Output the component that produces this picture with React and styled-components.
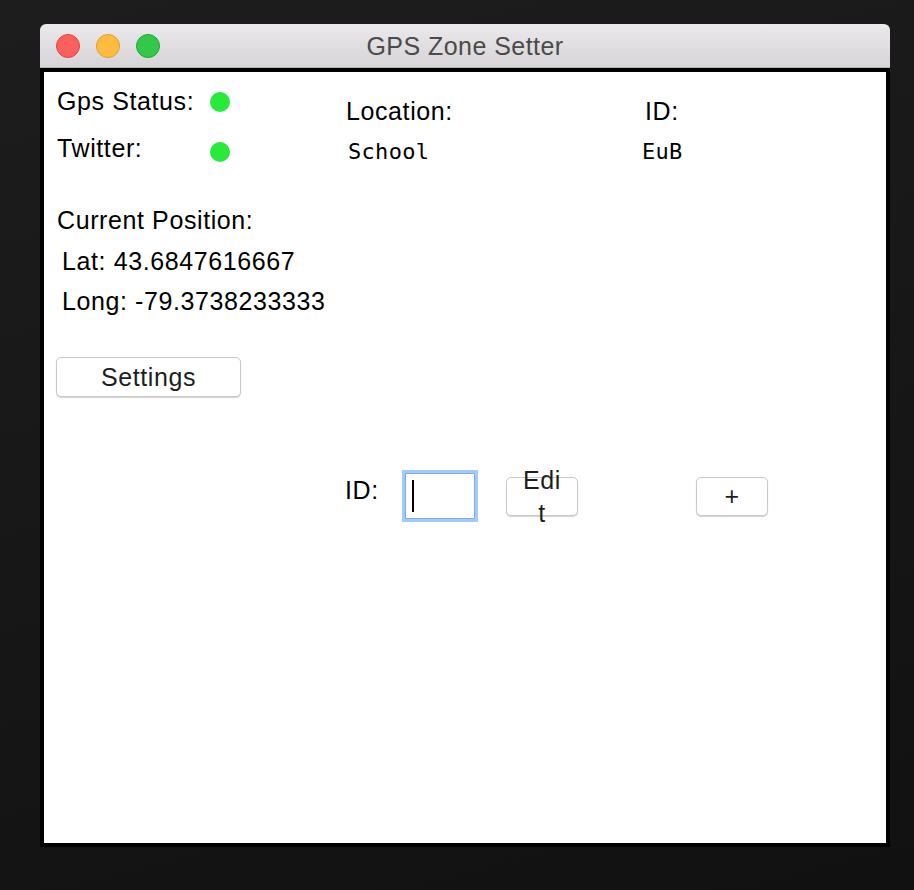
import styled, { createGlobalStyle } from 'styled-components'

const GlobalStyle = createGlobalStyle`
  html, body {
    margin: 0;
    padding: 0;
  }
  body {
    min-height: 890px;
    background: linear-gradient(165deg, #1d1d1d 0%, #161616 60%, #111111 100%);
    font-family: 'Liberation Sans', Arial, sans-serif;
  }
`

const Screen = styled.div`
  padding: 24px 0 0 40px;
`

const Window = styled.div`
  width: 850px;
  display: flex;
  flex-direction: column;
`

const TitleBar = styled.div`
  height: 43px;
  display: grid;
  grid-template-columns: 1fr auto 1fr;
  align-items: center;
  padding: 0 16px;
  background: linear-gradient(#ebe9eb, #d6d4d6);
  border-bottom: 1px solid #b3b1b3;
  border-radius: 6px 6px 0 0;
`

const Lights = styled.div`
  display: flex;
  gap: 16px;
`

const Light = styled.span`
  width: 22px;
  height: 22px;
  border-radius: 50%;
  background: ${(p) => p.$fill};
  border: 1px solid ${(p) => p.$edge};
`

const Title = styled.div`
  font-size: 25px;
  letter-spacing: 0.45px;
  color: #4b4b4b;
  margin-top: 1px;
`

const Body = styled.div`
  height: 757px;
  background: #ffffff;
  border: 4px solid #000000;
  padding: 14px 0 0 13px;
  box-sizing: content-box;
`

const TopArea = styled.div`
  display: flex;
  align-items: flex-start;
`

const Column = styled.div`
  width: ${(p) => p.$width};
  display: flex;
  flex-direction: column;
  align-items: flex-start;
`

const Label = styled.div`
  font-size: 25px;
  line-height: 30px;
  letter-spacing: 0.6px;
  color: #000000;
  white-space: nowrap;
  margin-top: ${(p) => p.$top || 0}px;
  margin-left: ${(p) => p.$left || 0}px;
  width: ${(p) => (p.$width ? `${p.$width}px` : 'auto')};
`

const Value = styled.div`
  font-family: 'DejaVu Sans Mono', 'Liberation Mono', monospace;
  font-size: 22px;
  line-height: 30px;
  letter-spacing: 0.3px;
  color: #000000;
  margin-top: ${(p) => p.$top || 0}px;
  margin-left: ${(p) => p.$left || 0}px;
`

const StatusRow = styled.div`
  display: flex;
  align-items: flex-start;
  height: 30px;
  margin-top: ${(p) => p.$top || 0}px;
`

const Dot = styled.span`
  width: 20px;
  height: 20px;
  border-radius: 50%;
  background: #27ea3b;
  margin-top: ${(p) => p.$top}px;
`

const Button = styled.button`
  box-sizing: border-box;
  width: ${(p) => p.$width}px;
  height: ${(p) => p.$height}px;
  margin-top: ${(p) => p.$top || 0}px;
  margin-left: ${(p) => p.$left || 0}px;
  padding: 0;
  display: flex;
  align-items: center;
  justify-content: center;
  overflow: visible;
  background: #ffffff;
  border: 1px solid #c9c9c9;
  border-radius: 5px;
  box-shadow: 0 1px 1px rgba(0, 0, 0, 0.18);
  font-family: 'Liberation Sans', Arial, sans-serif;
  font-size: 25px;
  letter-spacing: 0.6px;
  color: #1e1e1e;
`

const WrapText = styled.span`
  display: block;
  width: 40px;
  line-height: 33px;
  text-align: center;
  word-break: break-all;
`

const BottomRow = styled.div`
  display: flex;
  align-items: flex-start;
  margin: 73px 0 0 288px;
`

const Field = styled.div`
  box-sizing: border-box;
  width: 76px;
  height: 52px;
  border: 3px solid #a4cbf8;
  box-shadow: inset 0 0 0 1px #7daeec;
  background: #ffffff;
  padding: 7px 0 0 7px;
`

const Caret = styled.span`
  display: block;
  width: 2px;
  height: 32px;
  background: #000000;
`

export default function App() {
  return (
    <>
      <GlobalStyle />
      <Screen>
        <Window>
          <TitleBar>
            <Lights>
              <Light $fill="#fc605c" $edge="#e0443e" />
              <Light $fill="#fdbc40" $edge="#dea123" />
              <Light $fill="#34c84a" $edge="#1aab29" />
            </Lights>
            <Title>GPS Zone Setter</Title>
            <div />
          </TitleBar>
          <Body>
            <TopArea>
              <Column $width="288px">
                <StatusRow>
                  <Label $width={153}>Gps Status:</Label>
                  <Dot $top={6} />
                </StatusRow>
                <StatusRow $top={17}>
                  <Label $width={153}>Twitter:</Label>
                  <Dot $top={9} />
                </StatusRow>
                <Label $top={42}>Current Position:</Label>
                <Label $top={11} $left={5}>Lat: 43.6847616667</Label>
                <Label $top={10} $left={5}>Long: -79.3738233333</Label>
                <Button $width={185} $height={40} $top={41} $left={-1}>
                  Settings
                </Button>
              </Column>
              <Column $width="298px">
                <Label $top={10} $left={1}>Location:</Label>
                <Value $top={11} $left={3}>School</Value>
              </Column>
              <Column $width="200px">
                <Label $top={10} $left={2}>ID:</Label>
                <Value $top={11} $left={-1}>EuB</Value>
              </Column>
            </TopArea>
            <BottomRow>
              <Label $top={5} $width={57}>ID:</Label>
              <Field>
                <Caret />
              </Field>
              <Button $width={72} $height={39} $top={7} $left={28}>
                <WrapText>Edit</WrapText>
              </Button>
              <Button $width={72} $height={39} $top={7} $left={118}>
                +
              </Button>
            </BottomRow>
          </Body>
        </Window>
      </Screen>
    </>
  )
}
